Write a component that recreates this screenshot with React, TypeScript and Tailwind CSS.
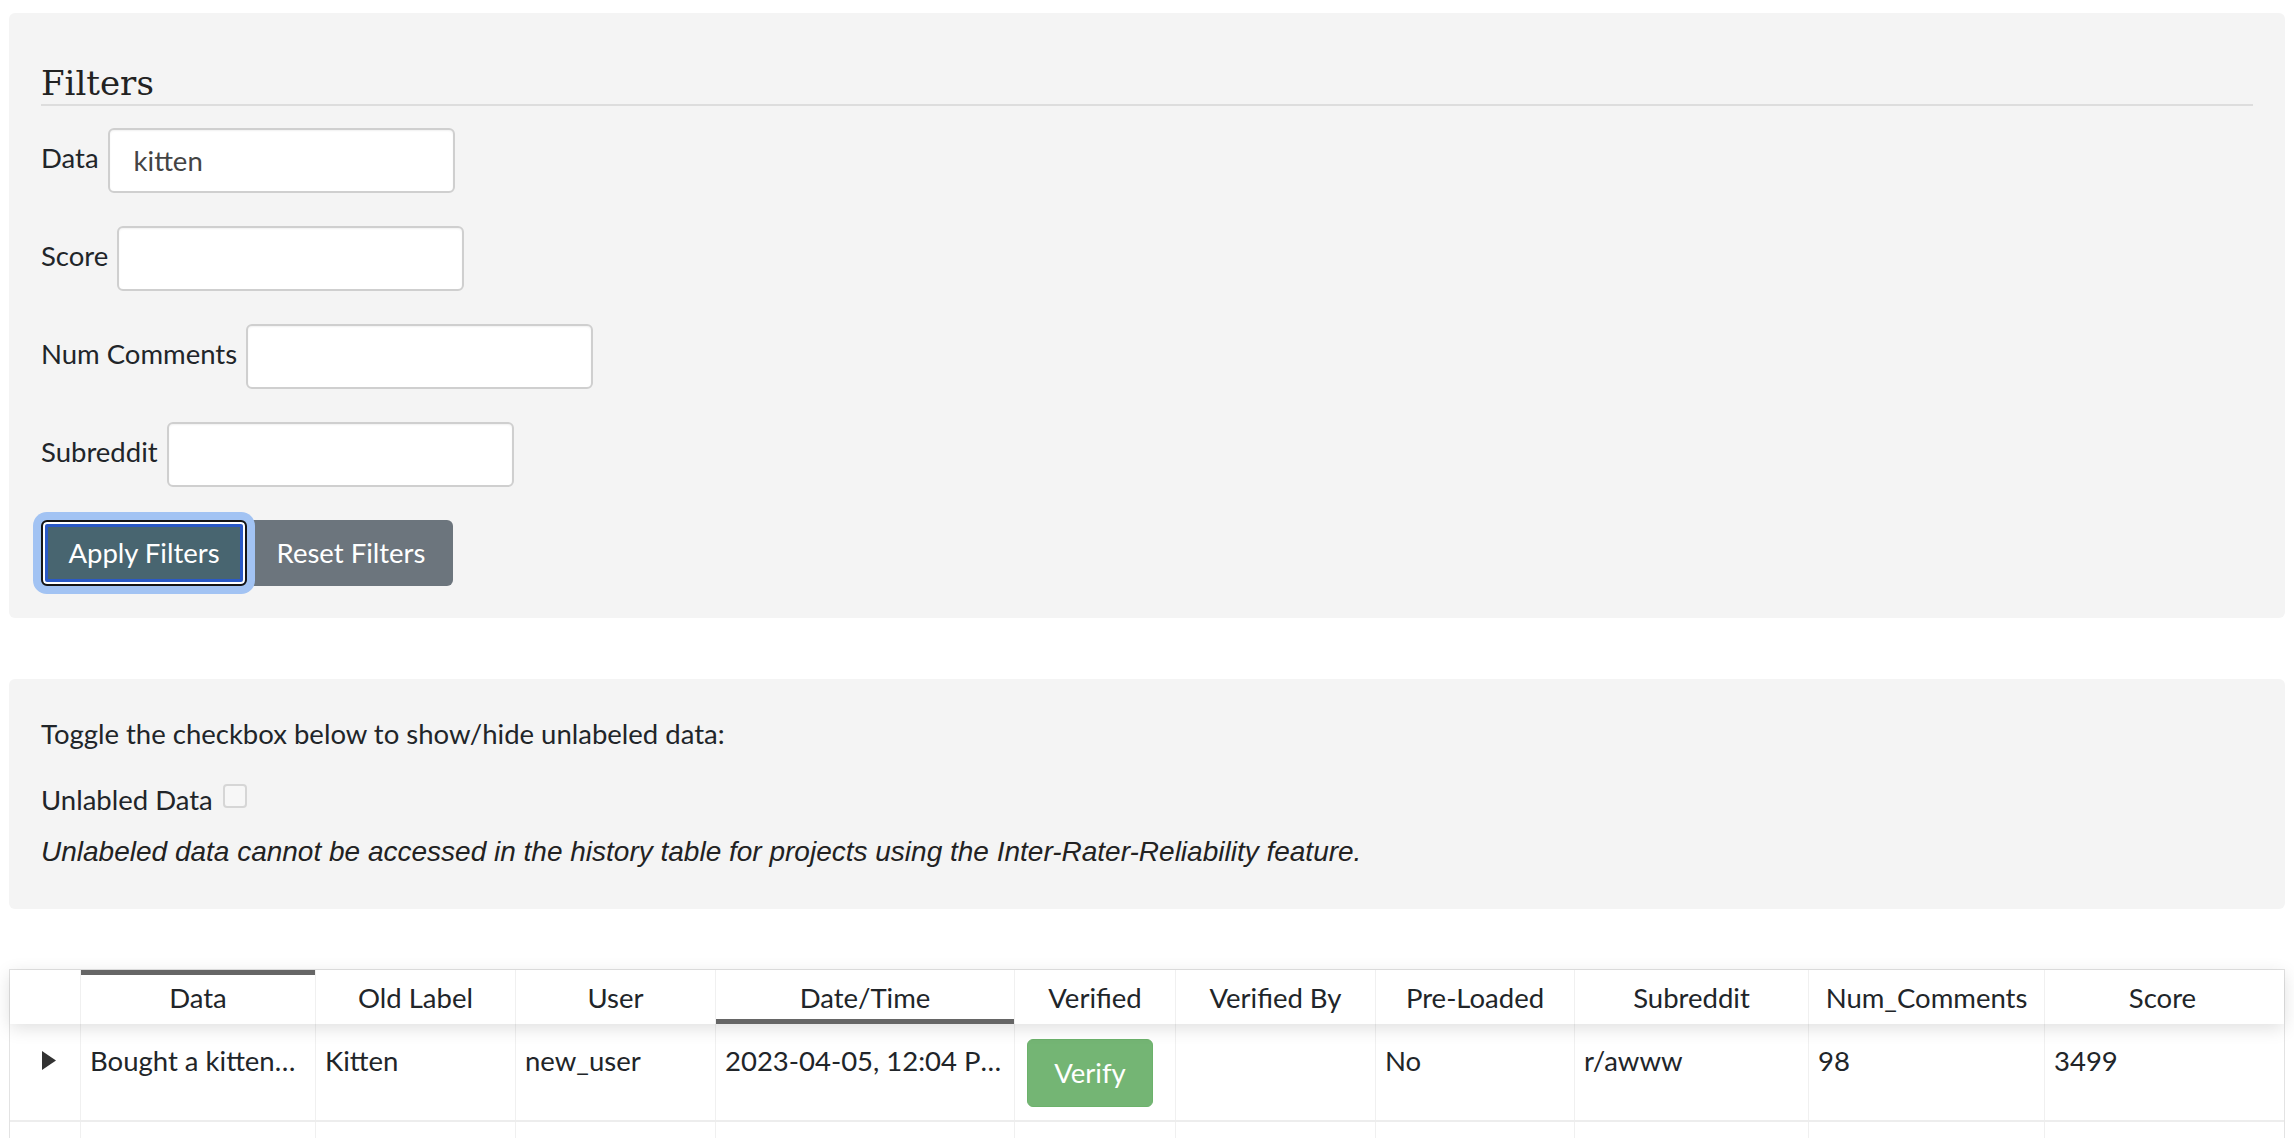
import React from "react";

const lato = { fontFamily: "Lato, 'Noto Sans', sans-serif" };

const columns = [
  { key: "expander", label: "", width: 71 },
  { key: "data", label: "Data", width: 235, sort: "asc" },
  { key: "old", label: "Old Label", width: 200 },
  { key: "user", label: "User", width: 200 },
  { key: "date", label: "Date/Time", width: 299, sort: "desc" },
  { key: "verified", label: "Verified", width: 161 },
  { key: "verifiedBy", label: "Verified By", width: 200 },
  { key: "preloaded", label: "Pre-Loaded", width: 199 },
  { key: "subreddit", label: "Subreddit", width: 234 },
  { key: "comments", label: "Num_Comments", width: 236 },
  { key: "score", label: "Score", width: 235 },
];

const row: Record<string, string> = {
  data: "Bought a kitten today and she is the cutest",
  old: "Kitten",
  user: "new_user",
  date: "2023-04-05, 12:04 PM",
  verifiedBy: "",
  preloaded: "No",
  subreddit: "r/awww",
  comments: "98",
  score: "3499",
};

function FilterRow({ label, value }: { label: string; value?: string }) {
  return (
    <div className="flex items-center">
      <label className="mr-[9px] -mt-[6px] text-[27.5px] text-[#212529]">{label}</label>
      <input
        defaultValue={value}
        className="h-[65px] w-[347px] rounded-[6px] border-2 border-[#cfcfcf] bg-white px-[24px] text-[27.5px] text-[#444] shadow-[inset_0_1px_2px_rgba(0,0,0,0.06)] outline-none"
        style={lato}
      />
    </div>
  );
}

export default function App() {
  return (
    <div className="min-h-screen bg-white px-[9px] pt-[13px] pb-10" style={lato}>
      {/* filters */}
      <div className="rounded-[6px] bg-[#f4f4f4] px-[32px] pt-[50px] pb-[32px]">
        <h2
          className="border-b-2 border-[#dddddd] pb-[1px] text-[34px] leading-[40px] text-[#222]"
          style={{ fontFamily: "'DejaVu Serif', serif" }}>
          Filters
        </h2>
        <div className="mt-[22px] flex flex-col gap-[33px]">
          <FilterRow label="Data" value="kitten" />
          <FilterRow label="Score" />
          <FilterRow label="Num Comments" />
          <FilterRow label="Subreddit" />
          <div className="flex">
            <button className="relative z-10 h-[66px] w-[206px] rounded-[6px] border-2 border-[#141414] bg-[#486570] text-[27.5px] text-white shadow-[inset_0_0_0_2px_#ffffff,inset_0_0_0_5px_#2a59c6,0_0_0_8px_#a2c3f3]">
              Apply Filters
            </button>
            <button className="ml-[2px] h-[66px] w-[204px] rounded-r-[6px] bg-[#6c757d] text-[27.5px] text-white">
              Reset Filters
            </button>
          </div>
        </div>
      </div>

      {/* unlabeled toggle */}
      <div className="mt-[61px] h-[230px] rounded-[6px] bg-[#f4f4f4] px-[32px] pt-[36px] text-[27.5px] text-[#212529]">
        <p className="leading-[38px]">Toggle the checkbox below to show/hide unlabeled data:</p>
        <div className="mt-[28px] flex items-center leading-[38px]">
          <span>Unlabled Data</span>
          <span className="mb-[8px] ml-[10px] inline-block h-[24px] w-[24px] rounded-[4px] border-2 border-[#d6d6d6] bg-[#f7f7f7]" />
        </div>
        <p
          className="mt-[14px] text-[28px] italic leading-[38px] text-[#222]"
          style={{ fontFamily: "'Liberation Sans', Arial, sans-serif" }}>
          Unlabeled data cannot be accessed in the history table for projects using the Inter-Rater-Reliability
          feature.
        </p>
      </div>

      {/* history table */}
      <div className="mt-[60px] border border-[#e3e3e3] text-[27.5px] text-[#212529]">
        <div className="relative z-10 flex bg-white shadow-[0_4px_18px_0_rgba(0,0,0,0.13)]">
          {columns.map((c) => (
            <div
              key={c.key}
              className={
                "flex h-[54px] shrink-0 items-center justify-center border-r border-[#f0f0f0] pt-[2px] last:border-r-0 " +
                (c.sort === "asc" ? "shadow-[inset_0_5px_0_0_#666666]" : "") +
                (c.sort === "desc" ? "shadow-[inset_0_-5px_0_0_#666666]" : "")
              }
              style={{ width: c.width }}>
              {c.label}
            </div>
          ))}
        </div>
        <div className="flex border-b-2 border-[#ededed]">
          {columns.map((c) => (
            <div
              key={c.key}
              className="h-[96px] shrink-0 overflow-hidden border-r border-[#f0f0f0] last:border-r-0"
              style={{ width: c.width }}>
              {c.key === "expander" ? (
                <div className="pt-[27px] pl-[32px]">
                  <svg width="14" height="19" viewBox="0 0 14 19">
                    <path d="M0 0 L14 9.5 L0 19 Z" fill="#333" />
                  </svg>
                </div>
              ) : c.key === "verified" ? (
                <div className="pt-[15px] pl-[12px]">
                  <button className="h-[68px] w-[126px] rounded-[6px] border border-[#6cb26b] bg-[#74b574] text-[27.5px] text-white">
                    Verify
                  </button>
                </div>
              ) : (
                <div
                  className={
                    "truncate pl-[9px] pt-[19px] leading-[36px] " + (c.key === "date" ? "pr-[9px]" : "pr-[14px]")
                  }>
                  {row[c.key]}
                </div>
              )}
            </div>
          ))}
        </div>
        <div className="flex">
          {columns.map((c) => (
            <div
              key={c.key}
              className="h-[96px] shrink-0 border-r border-[#f0f0f0] last:border-r-0"
              style={{ width: c.width }}
            />
          ))}
        </div>
      </div>
    </div>
  );
}
